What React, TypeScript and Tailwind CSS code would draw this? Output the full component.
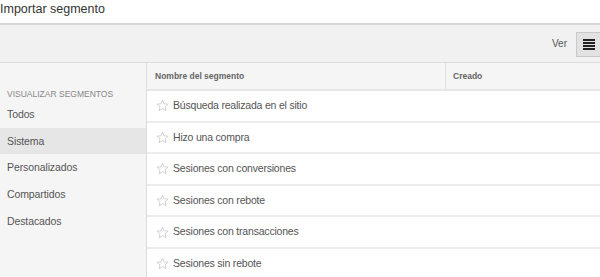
import React from "react";

const rows = [
  "Búsqueda realizada en el sitio",
  "Hizo una compra",
  "Sesiones con conversiones",
  "Sesiones con rebote",
  "Sesiones con transacciones",
  "Sesiones sin rebote",
];

const side = ["Todos", "Sistema", "Personalizados", "Compartidos", "Destacados"];

function Star() {
  return (
    <svg width="13" height="13" viewBox="0 0 24 24" className="shrink-0">
      <polygon
        points="12,2 14.9,8.9 22.3,9.5 16.7,14.4 18.4,21.6 12,17.8 5.6,21.6 7.3,14.4 1.7,9.5 9.1,8.9"
        fill="none"
        stroke="#cccccc"
        strokeWidth="1.6"
        strokeLinejoin="round"
      />
    </svg>
  );
}

export default function App() {
  return (
    <div
      className="w-[600px] h-[277px] overflow-hidden bg-white text-[#444] flex flex-col"
      style={{ fontFamily: '"Liberation Sans", Arial, sans-serif' }}
    >
      <div className="h-[23px] shrink-0 text-[12.5px] text-[#333] leading-[16px] pt-[1px]">Importar segmento</div>
      <div className="h-[2px] shrink-0 bg-[#d6d6d6]" />
      <div className="h-[38px] shrink-0 bg-[#f1f1f1] flex items-center justify-end border-b border-[#dcdcdc]">
        <span className="text-[10px] text-[#555] mr-[9px]">Ver</span>
        <div className="w-[24px] h-[25px] bg-[#e2e2e2] border border-r-0 border-[#c9c9c9] flex items-center justify-center mt-[1px]">
          <div className="flex flex-col gap-[1px] ml-[1px]">
            <div className="w-[12px] h-[2px] bg-[#222]" />
            <div className="w-[12px] h-[2px] bg-[#222]" />
            <div className="w-[12px] h-[2px] bg-[#222]" />
            <div className="w-[12px] h-[2px] bg-[#222]" />
          </div>
        </div>
      </div>
      <div className="flex flex-1 min-h-0">
        <div className="w-[147px] shrink-0 bg-[#f5f5f5] border-r border-[#dcdcdc] flex flex-col pt-[24px]">
          <div className="text-[8.5px] text-[#888] px-[7px] h-[14px] leading-[14px]">VISUALIZAR SEGMENTOS</div>
          <div className="flex flex-col">
            {side.map((s, i) => (
              <div
                key={s}
                className={
                  i === 1
                    ? "h-[26.7px] leading-[26.7px] px-[7px] text-[10.5px] tracking-[-0.1px] text-[#555] bg-[#e6e6e6]"
                    : "h-[26.7px] leading-[26.7px] px-[7px] text-[10.5px] tracking-[-0.1px] text-[#555]"
                }
              >
                {s}
              </div>
            ))}
          </div>
        </div>
        <div className="flex-1 flex flex-col min-w-0">
          <div className="h-[28px] shrink-0 bg-[#f5f5f5] flex text-[8.5px] font-bold text-[#666] border-b-2 border-[#e6e6e6]">
            <div className="w-[299px] border-r border-[#dedede] flex items-center px-[8px]">Nombre del segmento</div>
            <div className="flex-1 flex items-center px-[7px]">Creado</div>
          </div>
          {rows.map((r) => (
            <div
              key={r}
              className="h-[31.6px] shrink-0 flex items-center gap-[4px] px-[9px] border-b-2 border-[#ececec] text-[10.5px] tracking-[-0.2px] text-[#555]"
            >
              <Star />
              <span>{r}</span>
            </div>
          ))}
        </div>
      </div>
    </div>
  );
}
